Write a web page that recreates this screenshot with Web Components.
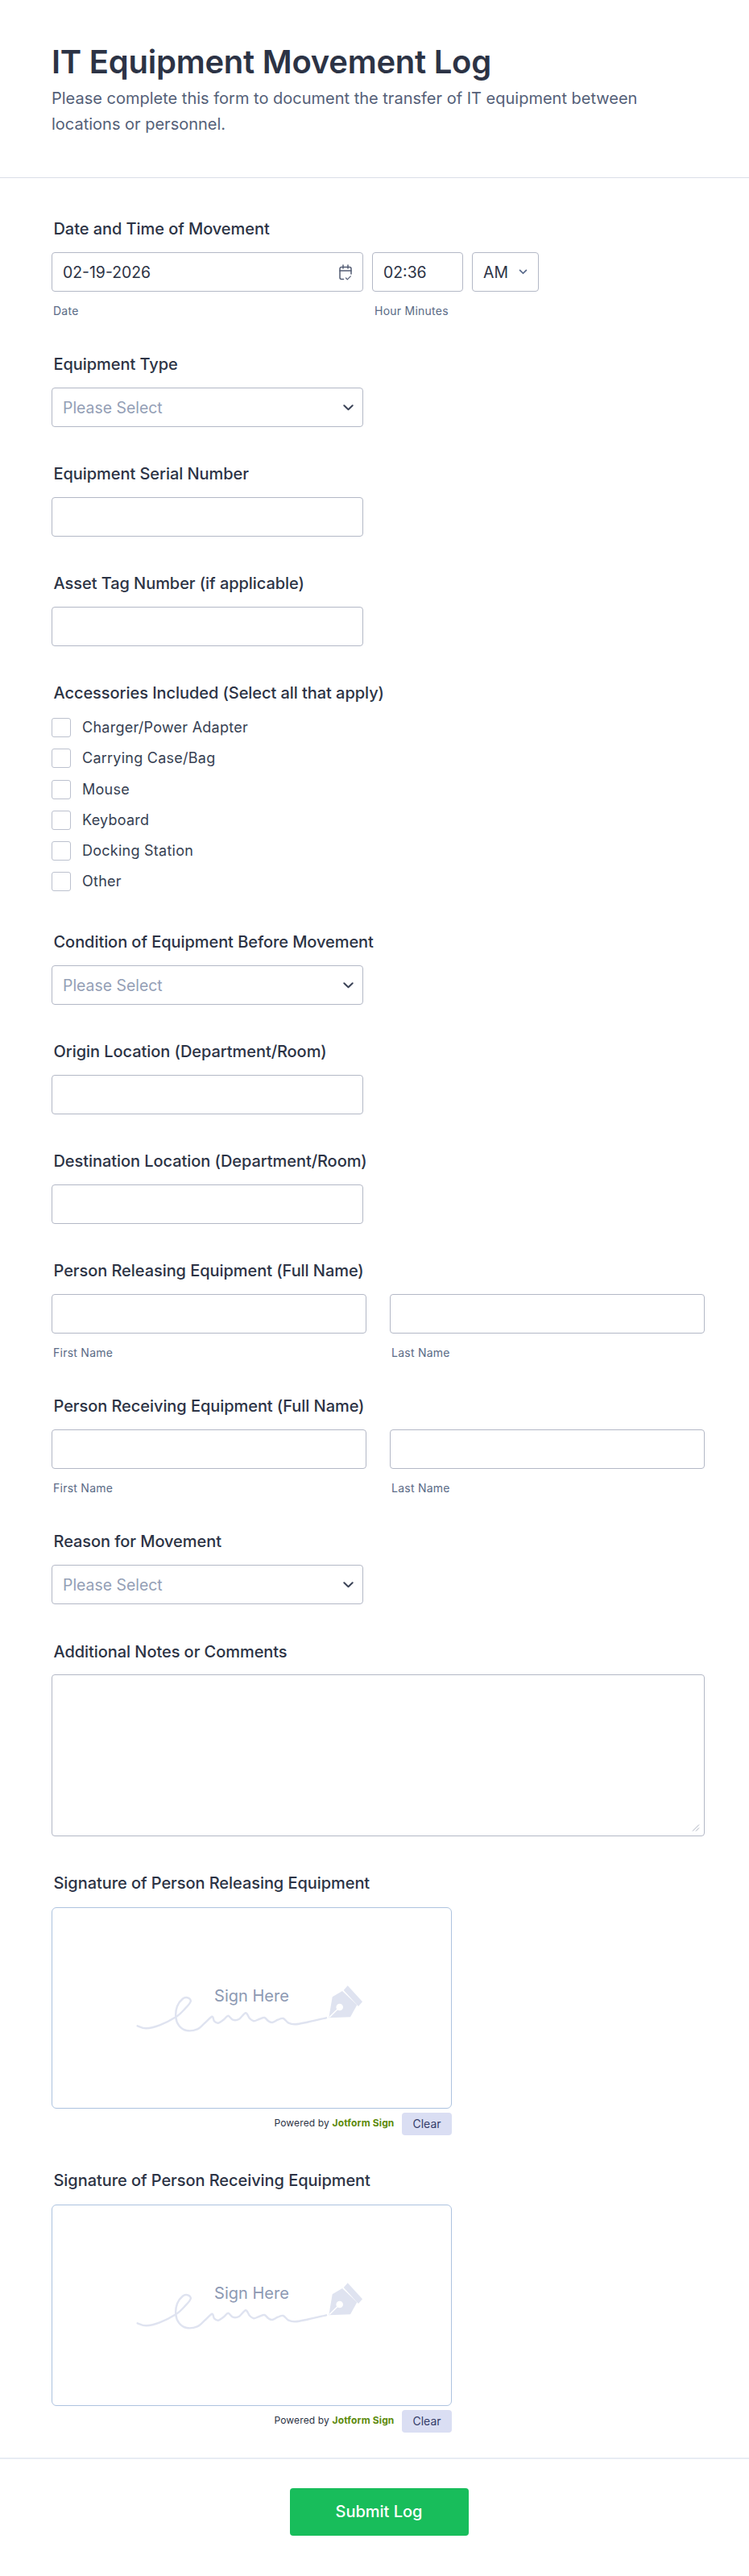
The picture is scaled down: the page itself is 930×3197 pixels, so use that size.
<!DOCTYPE html>
<html lang="en"><head><meta charset="utf-8"><title>IT Equipment Movement Log</title>
<style>
html,body{margin:0;padding:0;background:#fff}
body{font-family:Inter,"Liberation Sans",sans-serif;color:#2c3345}
</style></head><body>
<it-form>
<form-header slot="header" title-text="IT Equipment Movement Log">Please complete this form to document the transfer of IT equipment between locations or personnel.</form-header>
<date-field label="Date and Time of Movement" date="02-19-2026" time="02:36" ampm="AM"></date-field>
<select-field label="Equipment Type"></select-field>
<text-field label="Equipment Serial Number"></text-field>
<text-field label="Asset Tag Number (if applicable)"></text-field>
<check-field label="Accessories Included (Select all that apply)" options="Charger/Power Adapter|Carrying Case/Bag|Mouse|Keyboard|Docking Station|Other"></check-field>
<select-field label="Condition of Equipment Before Movement"></select-field>
<text-field label="Origin Location (Department/Room)"></text-field>
<text-field label="Destination Location (Department/Room)"></text-field>
<name-field label="Person Releasing Equipment (Full Name)"></name-field>
<name-field label="Person Receiving Equipment (Full Name)"></name-field>
<select-field label="Reason for Movement"></select-field>
<area-field label="Additional Notes or Comments"></area-field>
<sign-field label="Signature of Person Releasing Equipment"></sign-field>
<sign-field label="Signature of Person Receiving Equipment"></sign-field>
<form-submit slot="footer">Submit Log</form-submit>
</it-form>
<script>
const F='Inter,"Liberation Sans",sans-serif';
const LABEL=`.label{display:block;font:450 20px/28px ${F};letter-spacing:-.06px;color:#2c3345;margin:0 0 15px 2.5px;height:28px}
.sub{display:block;font:400 14px/20px ${F};letter-spacing:.25px;color:#5a6b86;margin:0 0 0 2px}
.box{box-sizing:border-box;height:49px;border:1px solid #b3b8c6;border-radius:4px;background:#fff;display:flex;align-items:center;padding:0 13px;font:400 19.400px/24px ${F};color:#2c3345}
svg{display:block;flex:none}`;
const CHEV=`<svg width="13" height="8" viewBox="0 0 13 8" fill="none"><path d="M1.300 1.300 6.500 6.300l5.200-5" stroke="#3b4357" stroke-width="2" stroke-linecap="round" stroke-linejoin="round"/></svg>`;
const SIGN_POINTS=[[170.7,2514.3],[181.7,2517.3],[198.3,2513.3],[218.3,2503.3],[230,2492.7],[236.7,2484],[233.3,2479.3],[226.7,2480.7],[220,2490],[218.3,2503.3],[222.3,2514],[231.7,2520],[245,2518.3],[255,2510],[263.3,2502.7],[266,2508.3],[271,2510.7],[278.3,2506],[283.3,2501.7],[289,2506.7],[296.7,2506],[305,2498.3],[310,2505],[315,2508.3],[321.7,2506],[328.3,2504],[333.3,2508.3],[338.3,2510],[345,2506.7],[351.7,2505],[358.3,2510.7],[366.7,2512.3],[383.3,2509.3],[405,2504.3]];
function smooth(p){let d=`M${p[0][0]} ${p[0][1]}`;for(let i=0;i<p.length-1;i++){const a=p[Math.max(i-1,0)],b=p[i],c=p[i+1],e=p[Math.min(i+2,p.length-1)];
const f=n=>n.toFixed(1);d+=`C${f(b[0]+(c[0]-a[0])/6)} ${f(b[1]+(c[1]-a[1])/6)} ${f(c[0]-(e[0]-b[0])/6)} ${f(c[1]-(e[1]-b[1])/6)} ${c[0]} ${c[1]}`}return d}
const SIGN_SVG=`<svg class="art" width="497" height="250" viewBox="64 2367 497 250" fill="none"><path d="${smooth(SIGN_POINTS)}" stroke="#dfe3f0" stroke-width="2.400" stroke-linecap="round" stroke-linejoin="round"/><path d="M408.300 2504.300 412.700 2478.300 425 2471 443.300 2488.300 435 2503.300Z" fill="#dfe3f0"/><path d="M431.700 2464.300 450 2484.300 445 2490 426.700 2470Z" fill="#dfe3f0"/><path d="M409 2503.500 421.700 2491" stroke="#fff" stroke-width="1.500"/><circle cx="421.700" cy="2491" r="4.300" fill="#fff"/></svg>`;
const def=(n,c)=>customElements.define(n,c);
const mount=(el,html)=>{el.attachShadow({mode:'open'}).innerHTML=html};
const a=(el,n)=>el.getAttribute(n)||'';
def('it-form',class extends HTMLElement{constructor(){super();mount(this,`<style>:host{display:block;width:930px}
.body{display:flex;flex-direction:column;padding:49px 54px 0 64px}
</style><slot name="header"></slot><div class="body"><slot></slot></div><slot name="footer"></slot>`)}});
def('form-header',class extends HTMLElement{connectedCallback(){mount(this,`<style>:host{display:block;box-sizing:border-box;height:221px;padding:51px 64px 0;border-bottom:1px solid #dadee8}
h1{margin:0;font:600 40px/52px ${F};letter-spacing:-.25px;color:#2c3345}
p{margin:3px 0 0;width:760px;font:400 20px/32px ${F};color:#545f78}
</style><h1>${a(this,'title-text')}</h1><p><slot></slot></p>`)}});
def('date-field',class extends HTMLElement{connectedCallback(){mount(this,`<style>:host{display:block;height:168px}${LABEL}
.row{display:flex;gap:11px}.d{width:387px;justify-content:space-between}.t{width:113px}.m{width:83px;justify-content:space-between}
.subs{display:flex;margin-top:14px}.subs span:first-child{width:397px}
</style><span class="label">${a(this,'label')}</span><div class="row"><div class="box d"><span>${a(this,'date')}</span>
<svg width="16" height="20" viewBox="0 0 16 20" fill="none" stroke="#545d74" stroke-width="1.500" stroke-linecap="round" stroke-linejoin="round"><path d="M5.500 18.500H3a2 2 0 0 1-2-2V5.500a2 2 0 0 1 2-2h10a2 2 0 0 1 2 2V12"/><path d="M1 8h14M5 1v4M11 1v4"/><path d="m8.500 17 1.800 1.800 4-4" stroke-width="1.200"/></svg></div>
<div class="box t">${a(this,'time')}</div><div class="box m"><span>${a(this,'ampm')}</span><svg width="11" height="7" viewBox="0 0 12 8" fill="none"><path d="M1.500 1.500 6 6l4.500-4.500" stroke="#57688a" stroke-width="2" stroke-linecap="round" stroke-linejoin="round"/></svg></div></div>
<div class="subs"><span class="sub">Date</span><span class="sub">Hour Minutes</span></div>`)}});
def('select-field',class extends HTMLElement{connectedCallback(){mount(this,`<style>:host{display:block;height:136px}${LABEL}
.box{width:387px;justify-content:space-between;color:#949fb6;padding-right:11px}
</style><span class="label">${a(this,'label')}</span><div class="box"><span>Please Select</span>${CHEV}</div>`)}});
def('text-field',class extends HTMLElement{connectedCallback(){mount(this,`<style>:host{display:block;height:136px}${LABEL}.box{width:387px}</style><span class="label">${a(this,'label')}</span><div class="box"></div>`)}});
def('check-field',class extends HTMLElement{connectedCallback(){const o=a(this,'options').split('|').map(t=>`<div class="o"><i></i><span>${t}</span></div>`).join('');mount(this,`<style>:host{display:block;height:309px}${LABEL}
.label{margin-bottom:17px}.list{display:flex;flex-direction:column;gap:14.300px}
.o{display:flex;align-items:center;gap:14px;height:24px;font:400 18px/24px ${F};letter-spacing:.25px;color:#363f52}
i{box-sizing:border-box;display:block;width:24px;height:24px;border:1px solid #bcc1ce;border-radius:3px}
</style><span class="label">${a(this,'label')}</span><div class="list">${o}</div>`)}});
def('name-field',class extends HTMLElement{connectedCallback(){mount(this,`<style>:host{display:block;height:168px}${LABEL}
.g{display:grid;grid-template-columns:391px 391px;column-gap:29px}.box{margin-bottom:14px}
</style><span class="label">${a(this,'label')}</span><div class="g"><div><div class="box"></div><span class="sub">First Name</span></div><div><div class="box"></div><span class="sub">Last Name</span></div></div>`)}});
def('area-field',class extends HTMLElement{connectedCallback(){mount(this,`<style>:host{display:block;height:277px}${LABEL}
.label{margin-top:1px;margin-bottom:14px}
.box{position:relative;width:811px;height:201px}svg{position:absolute;right:5px;bottom:5px}
</style><span class="label">${a(this,'label')}</span><div class="box"><svg width="10" height="9" viewBox="0 0 10 9" stroke="#a9afbd" stroke-width="1"><path d="M1 8.500 9 .5M5 8.500 9 4.500"/></svg></div>`)}});
def('sign-field',class extends HTMLElement{connectedCallback(){mount(this,`<style>:host{display:block;height:359px;margin-top:10px}${LABEL}
.label{margin-top:1px;margin-bottom:16px}
.pad{position:relative;box-sizing:border-box;width:497px;height:250px;border:1px solid #adc3df;border-radius:6px}
.pad span{font:400 20px/28px ${F};color:#8d99b3;position:absolute;left:0;right:0;text-align:center;top:95px}
.art{position:absolute;left:-1px;top:-1px}
.foot{width:497px;display:flex;justify-content:flex-end;align-items:center;gap:9.500px;margin-top:5px;font:400 12px/16px ${F};letter-spacing:.15px;color:#2c3345}
.foot>span{margin-top:-3px}
b{font-weight:700;color:#5c8a0c}
button{all:unset;box-sizing:border-box;width:62px;height:28px;border-radius:4px;background:#dadef3;color:#343c6a;font:400 14px/28px ${F};letter-spacing:0;text-align:center}
</style><span class="label">${a(this,'label')}</span><div class="pad">${SIGN_SVG}<span>Sign Here</span></div>
<div class="foot"><span>Powered by <b>Jotform Sign</b></span><button type="button">Clear</button></div>`)}});
def('form-submit',class extends HTMLElement{connectedCallback(){mount(this,`<style>:host{box-sizing:border-box;height:147px;border-top:2px solid #e8ecf4;padding-top:36px;display:flex;justify-content:center;align-items:flex-start}
button{all:unset;box-sizing:border-box;width:222px;height:59px;margin-left:11px;background:#18bd5b;border-radius:4px;color:#fff;font:500 20px/59px ${F};text-align:center}
</style><button type="button"><slot></slot></button>`)}});
</script></body></html>
